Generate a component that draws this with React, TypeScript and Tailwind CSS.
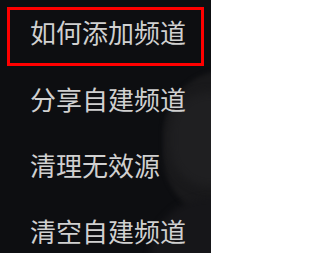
const items = ['如何添加频道', '分享自建频道', '清理无效源', '清空自建频道'];

export default function App() {
  return (
    <div
      className="relative h-[253px] w-[211px] overflow-hidden bg-[#0d0e11] text-[26px] text-[#d0d0d0]"
      style={{ fontFamily: '"Noto Sans CJK SC", "Noto Sans", sans-serif' }}
    >
      {/* blurred artwork behind the menu */}
      <div className="pointer-events-none absolute left-[163px] top-[70px] h-[150px] w-[130px] rounded-full bg-[#19191b] blur-[2px]" />
      <div className="pointer-events-none absolute left-[170px] top-[92px] h-[95px] w-[80px] rounded-full bg-[#1f1f21] blur-[4px]" />
      <div className="pointer-events-none absolute left-[150px] top-[198px] h-[120px] w-[120px] rounded-full bg-[#161619] blur-[3px]" />

      <ul className="relative">
        {items.map((item, index) =>
          index === 0 ? (
            <li key={item} className="h-[66px] px-[7px] pt-[7px]">
              <div className="flex h-[59px] items-center border-[3px] border-[#f00] pb-[9px] pl-[20px] leading-none">
                {item}
              </div>
            </li>
          ) : (
            <li key={item} className="flex h-[66px] items-center pl-[30px] leading-none">
              {item}
            </li>
          )
        )}
      </ul>
    </div>
  );
}
